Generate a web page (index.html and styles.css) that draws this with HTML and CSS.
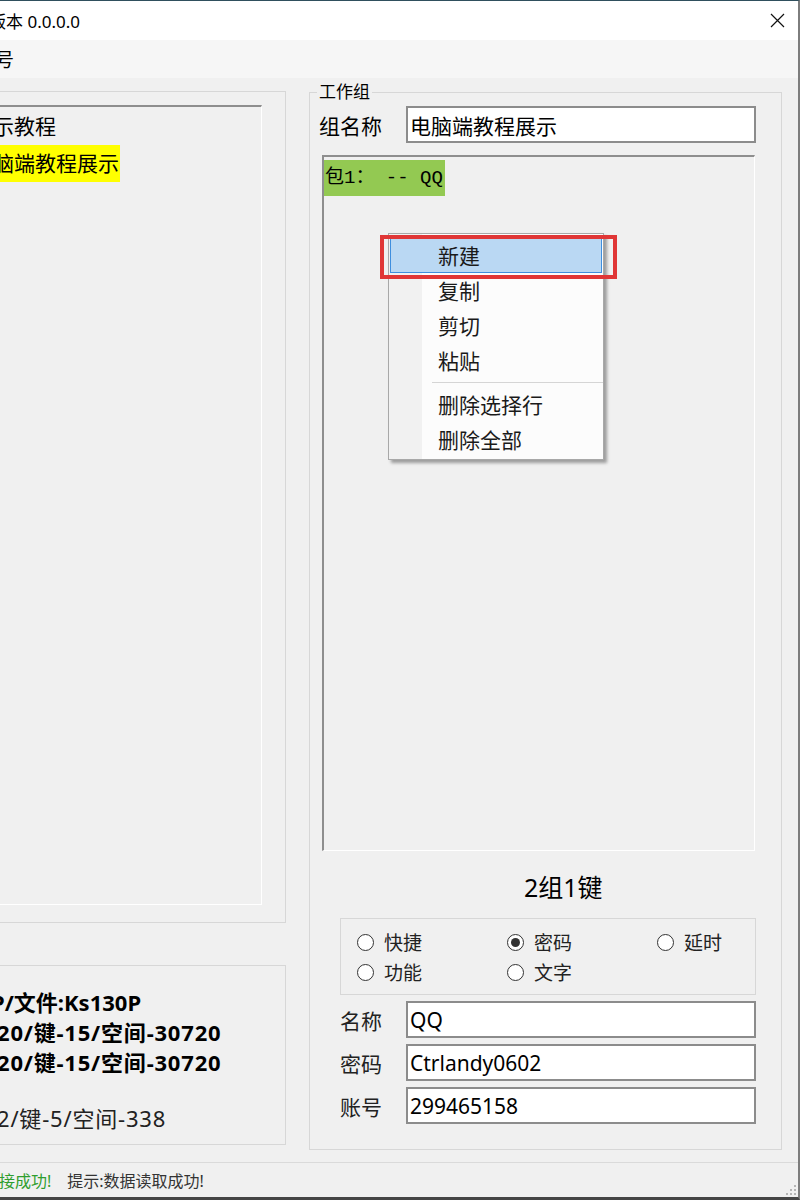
FILE: index.html
```html
<!DOCTYPE html>
<html lang="zh-CN">
<head>
    <meta charset="UTF-8">
    <title>版本 0.0.0.0</title>
    <link rel="stylesheet" href="styles.css">
</head>
<body>
    <div class="window">
        <div class="titlebar">
            <span class="title">版本 0.0.0.0</span>
            <svg class="close" width="15" height="15" viewBox="0 0 15 15">
                <path d="M1 1L14 14M14 1L1 14" stroke="#111" stroke-width="1.2" fill="none"/>
            </svg>
        </div>
        <div class="menubar"><span>账号</span></div>

        <div class="main">
            <div class="left-col">
                <div class="groupbox group-list">
                    <ul class="listbox tree">
                        <li>演示教程</li>
                        <li class="selected">电脑端教程展示</li>
                    </ul>
                </div>
                <div class="groupbox group-info">
                    <p class="bold model">P/文件:Ks130P</p>
                    <p class="bold">20/键-15/空间-30720</p>
                    <p class="bold">20/键-15/空间-30720</p>
                    <p class="used">2/键-5/空间-338</p>
                </div>
            </div>

            <fieldset class="workgroup">
                <legend>工作组</legend>
                <div class="field-row name-row">
                    <label for="group-name">组名称</label>
                    <input class="textbox" type="text" id="group-name" value="电脑端教程展示">
                </div>

                <div class="listbox keys">
                    <div class="key-item">包1： -- QQ</div>

                    <div class="context-menu">
                        <div class="menu-item active">新建</div>
                        <div class="menu-item">复制</div>
                        <div class="menu-item">剪切</div>
                        <div class="menu-item">粘贴</div>
                        <div class="menu-sep"></div>
                        <div class="menu-item">删除选择行</div>
                        <div class="menu-item">删除全部</div>
                    </div>
                    <div class="annotation"></div>
                </div>

                <div class="count">2组1键</div>

                <div class="radio-box">
                    <div class="radio"><span class="dot"></span>快捷</div>
                    <div class="radio"><span class="dot checked"></span>密码</div>
                    <div class="radio"><span class="dot"></span>延时</div>
                    <div class="radio"><span class="dot"></span>功能</div>
                    <div class="radio"><span class="dot"></span>文字</div>
                </div>

                <div class="field-row key-row">
                    <label for="key-name">名称</label>
                    <input class="textbox" type="text" id="key-name" value="QQ">
                </div>
                <div class="field-row key-row">
                    <label for="key-pass">密码</label>
                    <input class="textbox" type="text" id="key-pass" value="Ctrlandy0602">
                </div>
                <div class="field-row key-row">
                    <label for="key-account">账号</label>
                    <input class="textbox" type="text" id="key-account" value="299465158">
                </div>
            </fieldset>
        </div>

        <div class="statusbar">
            <span class="ok">连接成功!</span>
            <span class="hint">提示:数据读取成功!</span>
            <svg class="grip" width="13" height="13" viewBox="0 0 13 13">
                <rect x="10" y="2" width="2" height="2" fill="#b5b5b5"/>
                <rect x="6" y="6" width="2" height="2" fill="#b5b5b5"/>
                <rect x="10" y="6" width="2" height="2" fill="#b5b5b5"/>
                <rect x="2" y="10" width="2" height="2" fill="#b5b5b5"/>
                <rect x="6" y="10" width="2" height="2" fill="#b5b5b5"/>
                <rect x="10" y="10" width="2" height="2" fill="#b5b5b5"/>
            </svg>
        </div>
    </div>
</body>
</html>
```

FILE: styles.css
```css
/* Dialog in Windows 10 style, left side cut off by the screenshot */
:root {
    --face: #f0f0f0;
    --group-line: #d7d7d7;
    --sunken: #8e8e8e;
    --field-line: #8c8c8c;
}
* {
    box-sizing: border-box;
}
body {
    margin: 0;
    background-color: var(--face);
    font-family: "Noto Sans", "Noto Sans CJK SC", sans-serif;
    color: #000;
    overflow: hidden;
}
.window {
    width: 840px;
    height: 1200px;
    margin-left: -40px;
    display: flex;
    flex-direction: column;
    background-color: var(--face);
    border-top: 1px solid #2f4f5d;
    border-right: 2px solid #7d7d7d;
    border-bottom: 3px solid #454545;
}
.titlebar {
    height: 39px;
    display: flex;
    align-items: center;
    padding-left: 29px;
    background-color: #fff;
    font-size: 17px;
}
.titlebar .close {
    margin-left: auto;
    margin-right: 13px;
}
.menubar {
    height: 38px;
    display: flex;
    align-items: center;
    padding-left: 16px;
    background-color: #f6f6f6;
    font-size: 19px;
}
.main {
    flex: 1;
    display: flex;
    align-items: flex-start;
    gap: 23px;
    padding-left: 4px;
}

/* left column */
.left-col {
    width: 322px;
    display: flex;
    flex-direction: column;
}
.groupbox {
    border: 1px solid var(--group-line);
}
.group-list {
    height: 832px;
    margin-top: 13px;
    padding: 13px 23px 0 4px;
}
.listbox {
    border-style: solid;
    border-width: 2px 1px 1px 2px;
    border-color: var(--sunken) #fff #fff var(--sunken);
    background-color: var(--face);
}
.tree {
    width: 293px;
    height: 800px;
    margin: 0;
    padding: 1px 0 0;
    list-style: none;
    font-size: 21px;
    line-height: 37px;
}
.tree li {
    width: fit-content;
    padding: 0 1px;
}
.tree li.selected {
    background-color: #ffff00;
}
.group-info {
    height: 180px;
    margin-top: 42px;
    padding: 21px 0 0 32px;
    font-size: 22px;
    line-height: 30px;
    letter-spacing: 0.8px;
}
.group-info p {
    margin: 0;
    white-space: nowrap;
}
.group-info .bold {
    font-weight: 700;
}
.group-info .model {
    margin-left: -6px;
    letter-spacing: 0;
}
.group-info .used {
    margin-top: 26px;
    color: #222;
}

/* work group */
.workgroup {
    width: 473px;
    height: 1067px;
    min-width: 0;
    margin: 5px 0 0;
    padding: 5px 25px 0 9px;
    border: 1px solid var(--group-line);
}
.workgroup legend {
    margin-left: -2px;
    padding: 0 2px;
    font-size: 17px;
    line-height: 18px;
}
.field-row {
    height: 37px;
    display: flex;
    align-items: center;
    font-size: 21px;
}
.name-row label {
    width: 87px;
}
.key-row {
    margin-top: 6px;
    padding-left: 21px;
}
.key-row label {
    width: 66px;
    color: #222;
}
.textbox {
    width: 350px;
    height: 37px;
    margin: 0;
    padding: 0 2px;
    border: 2px solid var(--field-line);
    background-color: #fff;
    font-family: "Noto Sans", "Noto Sans CJK SC", sans-serif;
    font-size: 21px;
    color: #000;
    outline: none;
}
.keys {
    position: relative;
    width: 433px;
    height: 696px;
    margin: 12px 0 0 3px;
}
.key-item {
    width: fit-content;
    margin-top: 3px;
    padding: 0 2px 0 1px;
    background-color: #93c952;
    font-family: "Liberation Mono", "Noto Sans CJK SC", monospace;
    font-size: 19px;
    line-height: 36px;
    white-space: pre;
}

/* right-click menu */
.context-menu {
    position: absolute;
    left: 64px;
    top: 76px;
    width: 216px;
    height: 227px;
    padding: 4px 0;
    border: 1px solid #a8a8a8;
    background: linear-gradient(to right, #f1f1f1 33px, #fcfcfc 33px);
    box-shadow: 3px 3px 3px rgba(0, 0, 0, 0.35);
    font-size: 21px;
}
.menu-item {
    height: 35px;
    margin: 0 1px;
    padding-left: 47px;
    line-height: 35px;
    border: 1px solid transparent;
    color: #1a1a1a;
}
.menu-item.active {
    background-color: #bad8f3;
    border-color: #3e8ede;
}
.menu-sep {
    height: 9px;
    margin-left: 43px;
    padding-top: 4px;
}
.menu-sep::before {
    content: "";
    display: block;
    height: 1px;
    background-color: #d5d5d5;
}
.annotation {
    position: absolute;
    left: 56px;
    top: 78px;
    width: 237px;
    height: 44px;
    border: 4px solid #e03636;
}

.count {
    margin: 20px 0 15px;
    padding-left: 205px;
    font-size: 25px;
    line-height: 32px;
}
.radio-box {
    width: 416px;
    height: 77px;
    margin-left: 21px;
    padding: 8px 0 0 16px;
    border: 1px solid var(--group-line);
    display: grid;
    grid-template-columns: 150px 150px 100px;
    grid-auto-rows: 30px;
    font-size: 19px;
    color: #222;
}
.radio {
    display: flex;
    align-items: center;
    gap: 10px;
}
.dot {
    width: 17px;
    height: 17px;
    border: 1.4px solid #333;
    border-radius: 50%;
    background-color: #fff;
    display: flex;
    align-items: center;
    justify-content: center;
}
.dot.checked::after {
    content: "";
    width: 9px;
    height: 9px;
    border-radius: 50%;
    background-color: #333;
}

/* status bar */
.statusbar {
    height: 35px;
    display: flex;
    align-items: center;
    gap: 16px;
    padding-left: 23px;
    border-top: 1px solid #dadada;
    font-size: 16px;
    color: #333;
}
.statusbar .ok {
    color: #2e9e2e;
}
.statusbar .grip {
    margin-left: auto;
    margin-right: 1px;
    align-self: flex-end;
    margin-bottom: 1px;
}
```
